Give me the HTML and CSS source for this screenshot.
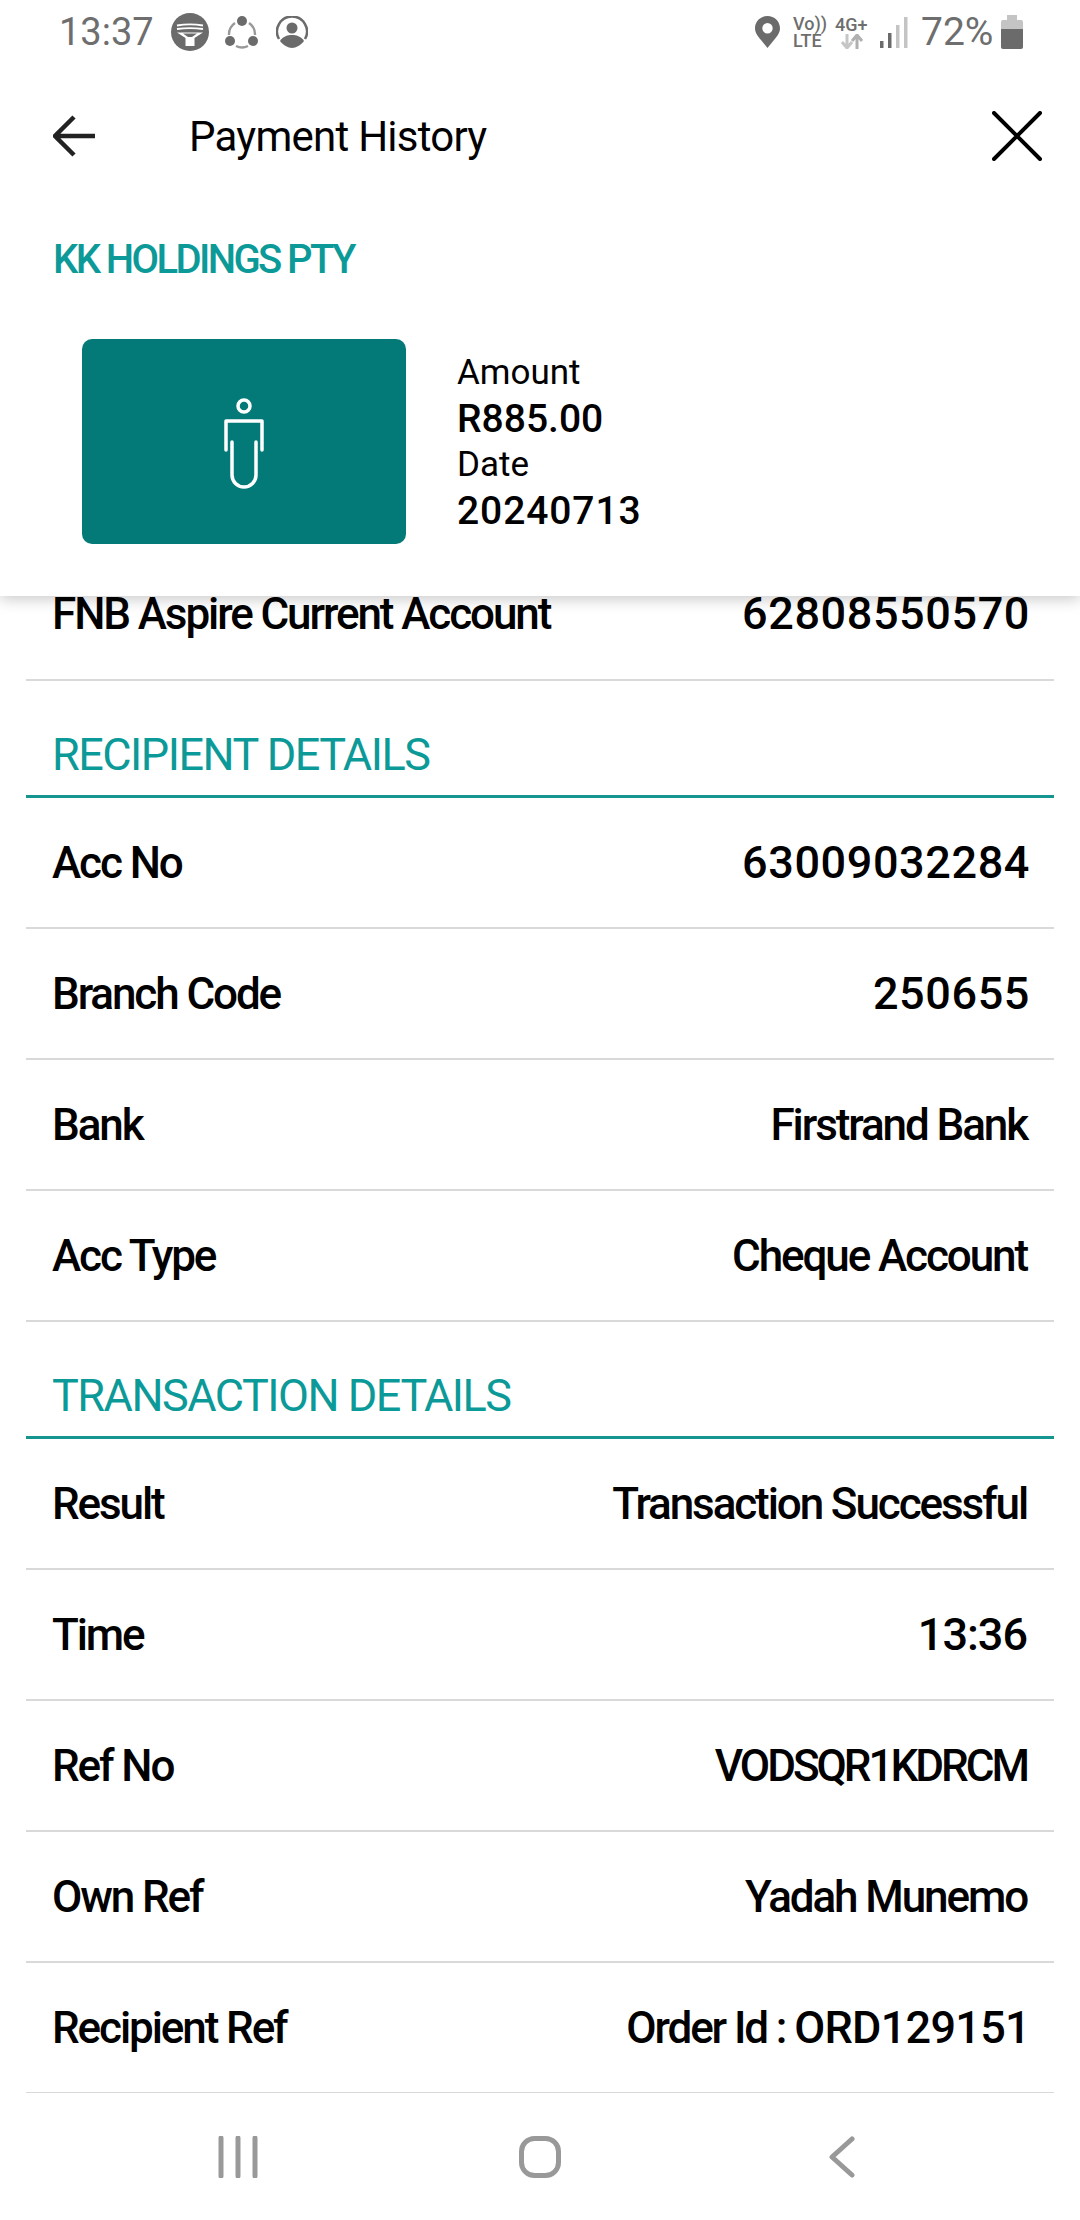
FILE: index.html
```html
<html>
    <head>
        <title>Payment History</title>
        <link rel="stylesheet" href="styles.css">
    </head>

    <body>
        <div class="page">
            <header class="topPanel">
                <!-- phone status bar -->
                <div class="statusBar">
                    <span class="clock">13:37</span>
                    <svg class="statusIcon iconBank" viewBox="0 0 38 38">
                        <circle cx="19" cy="19" r="19" fill="#6b6b6b"/>
                        <path d="M6 12.500c8-1.500 18-1.500 26 0M6 16c8-1 18-1 26 0" stroke="#fff" stroke-width="1.800" fill="none"/>
                        <path d="M6 19.500h26l-8.500 5.500v8h-9v-8z" fill="#fff"/>
                        <path d="M12 20.500h14l-5 3.500h-4z" fill="#6b6b6b"/>
                    </svg>
                    <svg class="statusIcon iconShare" viewBox="0 0 34 34">
                        <path d="M10 8A14 14 0 0 0 4 20M11 31a14 14 0 0 0 12 0M24 8a14 14 0 0 1 6 12" stroke="#999" stroke-width="2.400" fill="none"/>
                        <circle cx="17" cy="6" r="5" fill="#6b6b6b"/>
                        <circle cx="5" cy="26" r="5" fill="#6b6b6b"/>
                        <circle cx="28" cy="26" r="5" fill="#6b6b6b"/>
                    </svg>
                    <svg class="statusIcon iconAccount" viewBox="0 0 32 32">
                        <path d="M3 23A15 15 0 1 1 29 23" stroke="#6b6b6b" stroke-width="2.500" fill="none"/>
                        <circle cx="16" cy="12" r="5.500" fill="#6b6b6b"/>
                        <path d="M4 25c3-5 8-6 12-6s9 1 12 6c-3 4-8 7-12 7s-9-3-12-7z" fill="#6b6b6b"/>
                    </svg>

                    <span class="statusSpacer"></span>

                    <svg class="iconPin" viewBox="0 0 25 32">
                        <path fill-rule="evenodd" fill="#6b6b6b" d="M12.500 0C5.600 0 0 5.400 0 12.200c0 4.400 3 8.300 6 11.700l6.500 8.100 6.500-8.100c3-3.400 6-7.300 6-11.700C25 5.400 19.400 0 12.500 0zm0 7a5.200 5.200 0 1 1 0 10.400 5.200 5.200 0 0 1 0-10.400z"/>
                    </svg>
                    <span class="netLabel volte">Vo))<br>LTE</span>
                    <span class="netBlock">
                        <span class="netLabel">4G+</span>
                        <svg class="iconArrows" viewBox="0 0 24 15">
                            <path d="M7 0v12M2 8l5 6 5-6" stroke="#c6c6c6" stroke-width="3" fill="none"/>
                            <path d="M17 15V3M12 7l5-6 5 6" stroke="#b0b0b0" stroke-width="3" fill="none"/>
                        </svg>
                    </span>
                    <svg class="iconSignal" viewBox="0 0 28 31">
                        <rect x="0" y="24" width="3.500" height="7" fill="#6b6b6b"/>
                        <rect x="8" y="16" width="3.500" height="15" fill="#6b6b6b"/>
                        <rect x="16" y="8" width="3.500" height="23" fill="#c4c4c4"/>
                        <rect x="24" y="0" width="3.500" height="31" fill="#c4c4c4"/>
                    </svg>
                    <span class="battery">72%</span>
                    <svg class="iconBattery" viewBox="0 0 22 34">
                        <path d="M6 0h10v5h4a2 2 0 0 1 2 2v7H0V7a2 2 0 0 1 2-2h4z" fill="#c4c4c4"/>
                        <path d="M0 14h22v18a2 2 0 0 1-2 2H2a2 2 0 0 1-2-2z" fill="#6b6b6b"/>
                    </svg>
                </div>

                <!-- title row -->
                <div class="titleBar">
                    <svg class="iconBack" viewBox="0 0 42 42">
                        <path d="M21 2L2 21l19 19M2 21h40" stroke="#222" stroke-width="4.500" fill="none"/>
                    </svg>
                    <span class="pageTitle">Payment History</span>
                    <svg class="iconClose" viewBox="0 0 50 50">
                        <path d="M2 2l46 46M48 2L2 48" stroke="#000" stroke-width="4" stroke-linecap="round" fill="none"/>
                    </svg>
                </div>

                <div class="payeeName">KK HOLDINGS PTY</div>

                <div class="summary">
                    <div class="tile">
                        <svg class="iconPerson" viewBox="0 0 40 92">
                            <circle cx="20" cy="8" r="6" stroke="#fff" stroke-width="3.500" fill="none"/>
                            <path d="M2 52V23h36v29M8 44v33a12 12 0 0 0 24 0V44" stroke="#fff" stroke-width="3.500" fill="none" stroke-linecap="round" stroke-linejoin="round"/>
                        </svg>
                    </div>
                    <div class="summaryText">
                        <div class="summaryLabel">Amount</div>
                        <div class="summaryValue amountValue">R885.00</div>
                        <div class="summaryLabel">Date</div>
                        <div class="summaryValue">20240713</div>
                    </div>
                </div>
            </header>

            <main class="details">
                <div class="row firstRow">
                    <span>FNB Aspire Current Account</span>
                    <span class="digits">62808550570</span>
                </div>

                <h2 class="sectionTitle">RECIPIENT DETAILS</h2>
                <div class="row"><span>Acc No</span><span class="digits">63009032284</span></div>
                <div class="row"><span>Branch Code</span><span class="digits">250655</span></div>
                <div class="row"><span>Bank</span><span>Firstrand Bank</span></div>
                <div class="row"><span>Acc Type</span><span>Cheque Account</span></div>

                <h2 class="sectionTitle">TRANSACTION DETAILS</h2>
                <div class="row"><span>Result</span><span>Transaction Successful</span></div>
                <div class="row"><span>Time</span><span class="digits timeValue">13:36</span></div>
                <div class="row"><span>Ref No</span><span class="refCode">VODSQR1KDRCM</span></div>
                <div class="row"><span>Own Ref</span><span>Yadah Munemo</span></div>
                <div class="row"><span>Recipient Ref</span><span class="orderRef">Order Id : <span class="digits orderCode">ORD129151</span></span></div>
            </main>

            <!-- phone navigation bar -->
            <nav class="navBar">
                <svg class="iconRecents" viewBox="0 0 40 42">
                    <path d="M3 2v38M20 2v38M37 2v38" stroke="#999" stroke-width="5" stroke-linecap="round"/>
                </svg>
                <svg class="iconHome" viewBox="0 0 42 42">
                    <rect x="2.500" y="2.500" width="37" height="37" rx="13" stroke="#999" stroke-width="5" fill="none"/>
                </svg>
                <svg class="iconNavBack" viewBox="0 0 26 42">
                    <path d="M23 3L3 21l20 18" stroke="#999" stroke-width="5" stroke-linecap="round" stroke-linejoin="round" fill="none"/>
                </svg>
            </nav>
        </div>
    </body>
</html>
```

FILE: styles.css
```css
/* Page frame */
body {
    margin: 0;
    background-color: #fff;
    font-family: "Roboto", "Liberation Sans", sans-serif;
    color: #000;
}

.page {
    display: flex;
    flex-direction: column;
    height: 2220px;
    overflow: hidden;
}

/* Fixed top panel */
.topPanel {
    position: relative;
    z-index: 2;
    flex: none;
    height: 596px;
    background-color: #fff;
    box-shadow: 0 3px 14px rgba(0, 0, 0, 0.22);
}

/* Status bar */
.statusBar {
    display: flex;
    align-items: center;
    height: 64px;
    padding: 0 57px 0 59px;
    color: #6e6e6e;
}

.clock {
    font-size: 38px;
    width: 112px;
}

.statusIcon {
    flex: none;
}

.iconBank {
    width: 38px;
    height: 38px;
}

.iconShare {
    width: 34px;
    height: 34px;
    margin-left: 16px;
}

.iconAccount {
    width: 32px;
    height: 32px;
    margin-left: 17px;
}

.statusSpacer {
    flex: 1;
}

.iconPin {
    width: 25px;
    height: 32px;
}

.netLabel {
    display: block;
    font-size: 18px;
    font-weight: 500;
    line-height: 17px;
}

.volte {
    margin-left: 13px;
    width: 32px;
}

.netBlock {
    display: block;
    margin-left: 10px;
    width: 33px;
}

.iconArrows {
    display: block;
    width: 24px;
    height: 15px;
    margin: 1px 0 0 5px;
}

.iconSignal {
    width: 28px;
    height: 31px;
    margin-left: 12px;
}

.battery {
    font-size: 39px;
    margin-left: 13px;
    width: 80px;
}

.iconBattery {
    width: 22px;
    height: 34px;
}

/* Title row */
.titleBar {
    display: flex;
    align-items: center;
    height: 144px;
    padding: 0 38px 0 53px;
}

.iconBack {
    width: 42px;
    height: 42px;
}

.pageTitle {
    flex: 1;
    margin-left: 94px;
    font-size: 42px;
    letter-spacing: -0.75px;
}

.iconClose {
    width: 50px;
    height: 50px;
}

/* Payee */
.payeeName {
    margin: 28px 0 0 53px;
    font-size: 40px;
    line-height: 48px;
    font-weight: 500;
    letter-spacing: -2.6px;
    color: #0c9a99;
}

/* Card and amount */
.summary {
    display: flex;
    align-items: center;
    margin: 55px 0 0 82px;
}

.tile {
    display: flex;
    align-items: center;
    justify-content: center;
    width: 324px;
    height: 205px;
    border-radius: 10px;
    background-color: #047a78;
}

.iconPerson {
    width: 40px;
    height: 92px;
    margin-top: 4px;
}

.summaryText {
    margin-left: 51px;
}

.summaryLabel,
.summaryValue {
    font-size: 35px;
    line-height: 46px;
}

.summaryValue {
    font-size: 39px;
    font-weight: 500;
    letter-spacing: 0.9px;
}

.amountValue {
    letter-spacing: 0;
}

/* Scrolled details list */
.details {
    flex: 1;
    padding: 0 26px;
    overflow: hidden;
}

.row {
    display: flex;
    align-items: center;
    justify-content: space-between;
    box-sizing: border-box;
    height: 131px;
    padding: 0 27px 0 26px;
    border-bottom: 2px solid #d9d9d9;
    font-size: 44px;
    font-weight: 500;
    letter-spacing: -2.1px;
}

.digits {
    font-size: 45px;
    letter-spacing: 0.6px;
    margin-right: -3px;
}

.timeValue {
    letter-spacing: -1px;
    margin-right: 0;
}

.orderCode {
    letter-spacing: -0.7px;
    margin-right: 0;
}

.orderRef {
    margin-right: -3px;
}

.refCode {
    letter-spacing: -3px;
}

.firstRow {
    height: 85px;
    align-items: flex-start;
    line-height: 36px;
}

.sectionTitle {
    display: flex;
    align-items: center;
    box-sizing: border-box;
    height: 117px;
    margin: 0;
    padding: 33px 0 0 26px;
    border-bottom: 3px solid #14958f;
    font-size: 45px;
    font-weight: 400;
    letter-spacing: -1.5px;
    color: #0c9a99;
}

/* Navigation bar */
.navBar {
    display: grid;
    grid-template-columns: repeat(3, 302px);
    justify-content: center;
    justify-items: center;
    align-items: center;
    flex: none;
    height: 127px;
    background-color: #fff;
}

.iconRecents {
    width: 40px;
    height: 42px;
}

.iconHome {
    width: 42px;
    height: 42px;
}

.iconNavBack {
    width: 26px;
    height: 42px;
}
```
